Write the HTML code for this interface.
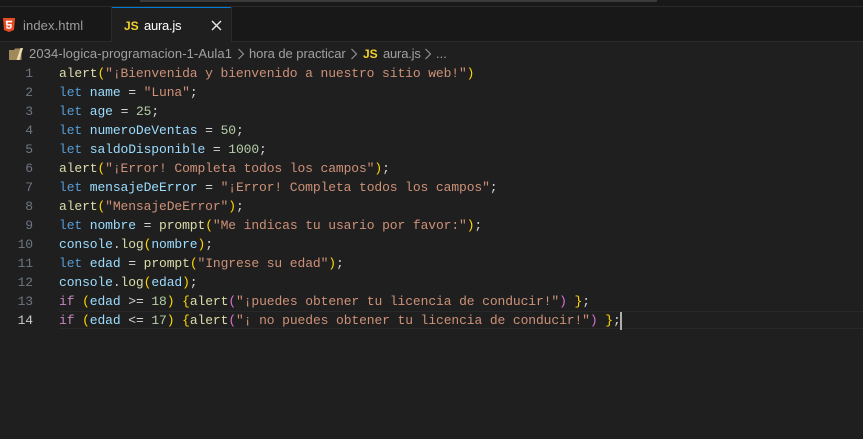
<!DOCTYPE html>
<html><head><meta charset="utf-8"><style>
html,body{margin:0;padding:0;width:863px;height:439px;overflow:hidden;background:#1f1f1f}
#root{position:relative;width:863px;height:439px;overflow:hidden;font-family:"Liberation Sans",sans-serif}
.abs{position:absolute}
.top{left:0;top:0;width:863px;height:41px;background:#181818}
.ln{position:absolute;left:0;width:33px;text-align:right;color:#6e7681;font:13px/19px "Liberation Mono",monospace;letter-spacing:-.11px}
.code{position:absolute;left:59px;white-space:pre;font:13px/19px "Liberation Mono",monospace;letter-spacing:-.11px;color:#ccc}
.k{color:#569cd6}.v{color:#9cdcfe}.f{color:#dcdcaa}.s{color:#ce9178}.n{color:#b5cea8}.o{color:#d4d4d4}.y{color:#ffd700}.p{color:#da70d6}.c{color:#c586c0}
.t{font-size:13px;line-height:18px;white-space:nowrap}
</style></head><body><div id="root">
<div class="abs top"></div>
<div class="abs" style="left:0;top:6px;width:863px;height:1px;background:#2b2b2b"></div>
<div class="abs" style="left:140px;top:0;width:517px;height:2px;background:#3a3a3a"></div>
<div class="abs" style="left:111px;top:7px;width:1px;height:34px;background:#2b2b2b"></div>
<div class="abs" style="left:112px;top:7px;width:120px;height:35px;background:#1f1f1f;border-right:1px solid #2b2b2b;box-sizing:border-box"></div>
<div class="abs" style="left:112px;top:7px;width:119px;height:1px;background:#0078d4"></div>
<div class="abs" style="left:0;top:41px;width:112px;height:1px;background:#2b2b2b"></div>
<div class="abs" style="left:232px;top:41px;width:631px;height:1px;background:#2b2b2b"></div>
<svg class="abs" style="left:3px;top:18px" width="12" height="14" viewBox="0 0 12 14"><path d="M0 0h12l-1 12L6 14 1 12z" fill="#e44d26"/><path d="M2.8 2.8h6.4l-.2 1.6H4.6l.1 1.7h4.1l-.3 4L6 11 3.4 10.2l-.1-2h1.5l.1 1 1.1.3 1.1-.3.1-1.6H3.2z" fill="#fff"/></svg>
<div class="abs t" style="left:23px;top:17px;color:#9d9d9d;letter-spacing:.1px">index.html</div>
<div class="abs" style="left:124px;top:18px;color:#f1d02c;font:bold 12px/16px 'Liberation Sans',sans-serif">JS</div>
<div class="abs t" style="left:144px;top:17px;color:#fff;letter-spacing:-.25px">aura.js</div>
<svg class="abs" style="left:211px;top:20px" width="11" height="11" viewBox="0 0 11 11"><path d="M1 1l9 9M10 1l-9 9" stroke="#e8e8e8" stroke-width="1.4" fill="none"/></svg>
<svg class="abs" style="left:9px;top:47px" width="14" height="14" viewBox="0 0 14 14"><path d="M0 3h5l1-1.5h6.5V13H0z" fill="#a08a5c"/><path d="M7.5 13L11.5 1h2.5l-3.5 12z" fill="#ecdcae"/></svg>
<div class="abs t" style="left:29px;top:45px;color:#a0a0a0;letter-spacing:.09px">2034-logica-programacion-1-Aula1</div>
<svg class="abs" style="left:237px;top:48px" width="8" height="12" viewBox="0 0 8 12"><path d="M1.5 1l5 5-5 5" stroke="#9d9d9d" fill="none"/></svg>
<div class="abs t" style="left:249px;top:45px;color:#a0a0a0;letter-spacing:-.05px">hora de practicar</div>
<svg class="abs" style="left:350px;top:48px" width="8" height="12" viewBox="0 0 8 12"><path d="M1.5 1l5 5-5 5" stroke="#9d9d9d" fill="none"/></svg>
<div class="abs" style="left:363px;top:46px;color:#f1d02c;font:bold 12px/16px 'Liberation Sans',sans-serif">JS</div>
<div class="abs t" style="left:383px;top:45px;color:#a0a0a0;letter-spacing:-.2px">aura.js</div>
<svg class="abs" style="left:424px;top:48px" width="8" height="12" viewBox="0 0 8 12"><path d="M1.5 1l5 5-5 5" stroke="#9d9d9d" fill="none"/></svg>
<div class="abs t" style="left:436px;top:45px;color:#a0a0a0">...</div>
<div class="abs" style="left:59px;top:311px;width:804px;height:16px;border-top:1px solid #282828;border-bottom:1px solid #282828"></div>
<div class="ln" style="top:64px">1</div><div class="ln" style="top:83px">2</div><div class="ln" style="top:102px">3</div><div class="ln" style="top:121px">4</div><div class="ln" style="top:140px">5</div><div class="ln" style="top:159px">6</div><div class="ln" style="top:178px">7</div><div class="ln" style="top:197px">8</div><div class="ln" style="top:216px">9</div><div class="ln" style="top:235px">10</div><div class="ln" style="top:254px">11</div><div class="ln" style="top:273px">12</div><div class="ln" style="top:292px">13</div><div class="ln" style="top:311px;color:#ccc">14</div>
<div class="code" style="top:64px"><span class="f">alert</span><span class="y">(</span><span class="s">"¡Bienvenida y bienvenido a nuestro sitio web!"</span><span class="y">)</span></div>
<div class="code" style="top:83px"><span class="k">let</span> <span class="v">name</span> <span class="o">=</span> <span class="s">"Luna"</span><span class="o">;</span></div>
<div class="code" style="top:102px"><span class="k">let</span> <span class="v">age</span> <span class="o">=</span> <span class="n">25</span><span class="o">;</span></div>
<div class="code" style="top:121px"><span class="k">let</span> <span class="v">numeroDeVentas</span> <span class="o">=</span> <span class="n">50</span><span class="o">;</span></div>
<div class="code" style="top:140px"><span class="k">let</span> <span class="v">saldoDisponible</span> <span class="o">=</span> <span class="n">1000</span><span class="o">;</span></div>
<div class="code" style="top:159px"><span class="f">alert</span><span class="y">(</span><span class="s">"¡Error! Completa todos los campos"</span><span class="y">)</span><span class="o">;</span></div>
<div class="code" style="top:178px"><span class="k">let</span> <span class="v">mensajeDeError</span> <span class="o">=</span> <span class="s">"¡Error! Completa todos los campos"</span><span class="o">;</span></div>
<div class="code" style="top:197px"><span class="f">alert</span><span class="y">(</span><span class="s">"MensajeDeError"</span><span class="y">)</span><span class="o">;</span></div>
<div class="code" style="top:216px"><span class="k">let</span> <span class="v">nombre</span> <span class="o">=</span> <span class="f">prompt</span><span class="y">(</span><span class="s">"Me indicas tu usario por favor:"</span><span class="y">)</span><span class="o">;</span></div>
<div class="code" style="top:235px"><span class="v">console</span><span class="o">.</span><span class="f">log</span><span class="y">(</span><span class="v">nombre</span><span class="y">)</span><span class="o">;</span></div>
<div class="code" style="top:254px"><span class="k">let</span> <span class="v">edad</span> <span class="o">=</span> <span class="f">prompt</span><span class="y">(</span><span class="s">"Ingrese su edad"</span><span class="y">)</span><span class="o">;</span></div>
<div class="code" style="top:273px"><span class="v">console</span><span class="o">.</span><span class="f">log</span><span class="y">(</span><span class="v">edad</span><span class="y">)</span><span class="o">;</span></div>
<div class="code" style="top:292px"><span class="c">if</span> <span class="y">(</span><span class="v">edad</span> <span class="o">&gt;=</span> <span class="n">18</span><span class="y">)</span> <span class="y">{</span><span class="f">alert</span><span class="p">(</span><span class="s">"¡puedes obtener tu licencia de conducir!"</span><span class="p">)</span> <span class="y">}</span><span class="o">;</span></div>
<div class="code" style="top:311px"><span class="c">if</span> <span class="y">(</span><span class="v">edad</span> <span class="o">&lt;=</span> <span class="n">17</span><span class="y">)</span> <span class="y">{</span><span class="f">alert</span><span class="p">(</span><span class="s">"¡ no puedes obtener tu licencia de conducir!"</span><span class="p">)</span> <span class="y">}</span><span class="o">;</span></div>
<div class="abs" style="left:620px;top:312px;width:2px;height:18px;background:#aeafad"></div>
</div></body></html>
